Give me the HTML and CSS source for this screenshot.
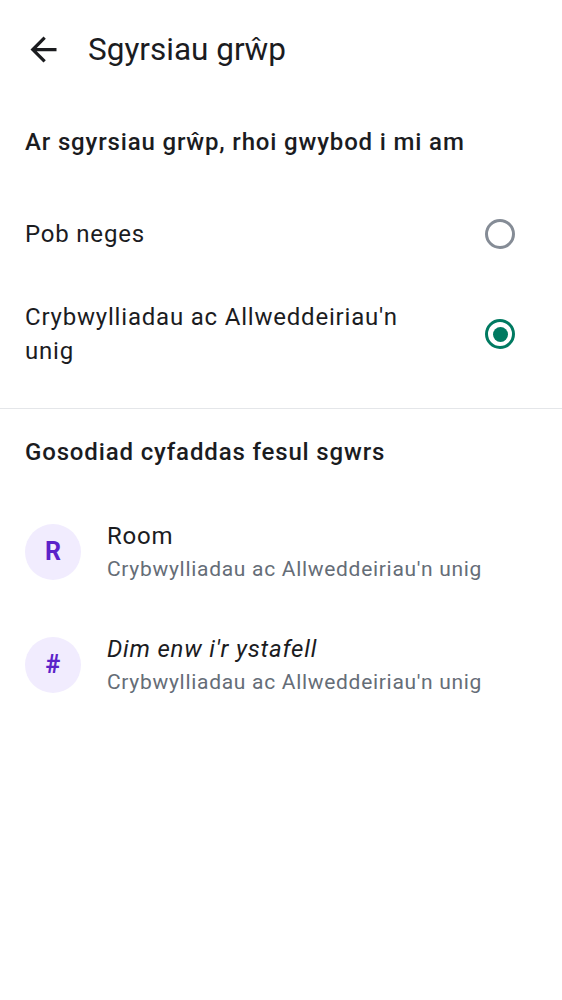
FILE: index.html
```html
<!DOCTYPE html>
<html lang="cy">
<head>
<meta charset="utf-8">
<link rel="stylesheet" href="styles.css">
</head>
<body>
<div class="page">
  <header class="topbar">
    <svg class="back" viewBox="0 0 24 24" width="39" height="39"><path d="M20 11H7.83l5.59-5.59L12 4l-8 8 8 8 1.41-1.41L7.83 13H20v-2z" fill="#1b1c1f"/></svg>
    <h1 class="title">Sgyrsiau grŵp</h1>
  </header>

  <div class="section-head first">Ar sgyrsiau grŵp, rhoi gwybod i mi am</div>

  <div class="options">
    <div class="option opt1">
      <span class="option-label">Pob neges</span>
      <span class="radio"></span>
    </div>
    <div class="option opt2">
      <span class="option-label">Crybwylliadau ac Allweddeiriau'n unig</span>
      <span class="radio checked"></span>
    </div>
  </div>

  <div class="divider"></div>

  <div class="section-head second">Gosodiad cyfaddas fesul sgwrs</div>

  <div class="room">
    <div class="avatar">R</div>
    <div class="room-text">
      <div class="room-name">Room</div>
      <div class="room-sub">Crybwylliadau ac Allweddeiriau'n unig</div>
    </div>
  </div>
  <div class="room">
    <div class="avatar">#</div>
    <div class="room-text">
      <div class="room-name italic">Dim enw i'r ystafell</div>
      <div class="room-sub">Crybwylliadau ac Allweddeiriau'n unig</div>
    </div>
  </div>
</div>
</body>
</html>
```

FILE: styles.css
```css
* { box-sizing: border-box; }
html, body {
  margin: 0;
  padding: 0;
  background: #ffffff;
}
body {
  font-family: Roboto, "Noto Sans", sans-serif;
  color: #1b1c1f;
}
.page {
  width: 562px;
}
.topbar {
  height: 98px;
  display: flex;
  align-items: center;
  padding-left: 24px;
}
.back {
  display: block;
  flex: none;
}
.title {
  margin: 0 0 0 25px;
  font-size: 31.5px;
  font-weight: 400;
  letter-spacing: 0;
}
.section-head {
  display: flex;
  align-items: center;
  padding: 0 25px;
  font-size: 24px;
  font-weight: 500;
  letter-spacing: 0.85px;
}
.section-head.first { height: 88px; }
.section-head.second { height: 86px; }
.options {
  padding-bottom: 22px;
}
.option {
  display: flex;
  align-items: center;
  justify-content: space-between;
  padding: 0 47px 0 25px;
}
.opt1 { height: 96px; }
.opt2 { height: 104px; }
.option-label {
  font-size: 24px;
  line-height: 34px;
  letter-spacing: 0.8px;
  max-width: 410px;
}
.radio {
  flex: none;
  width: 30px;
  height: 30px;
  border-radius: 50%;
  border: 3px solid #858c96;
  display: flex;
  align-items: center;
  justify-content: center;
}
.radio.checked {
  border-color: #007a61;
}
.radio.checked::after {
  content: "";
  width: 15px;
  height: 15px;
  border-radius: 50%;
  background: #007a61;
}
.divider {
  height: 1px;
  background: #e4e6e9;
}
.room {
  height: 113px;
  display: flex;
  align-items: center;
  padding-left: 25px;
}
.avatar {
  flex: none;
  width: 56px;
  height: 56px;
  border-radius: 50%;
  background: #f1ecfe;
  color: #5b22c9;
  font-weight: 700;
  font-size: 25px;
  display: flex;
  align-items: center;
  justify-content: center;
}
.room-text {
  margin-left: 26px;
}
.room-name {
  font-size: 24px;
  line-height: 34px;
  letter-spacing: 0.8px;
}
.room-name.italic { font-style: italic; }
.room-sub {
  font-size: 21px;
  line-height: 32px;
  color: #656d77;
  letter-spacing: 0.7px;
}
```
